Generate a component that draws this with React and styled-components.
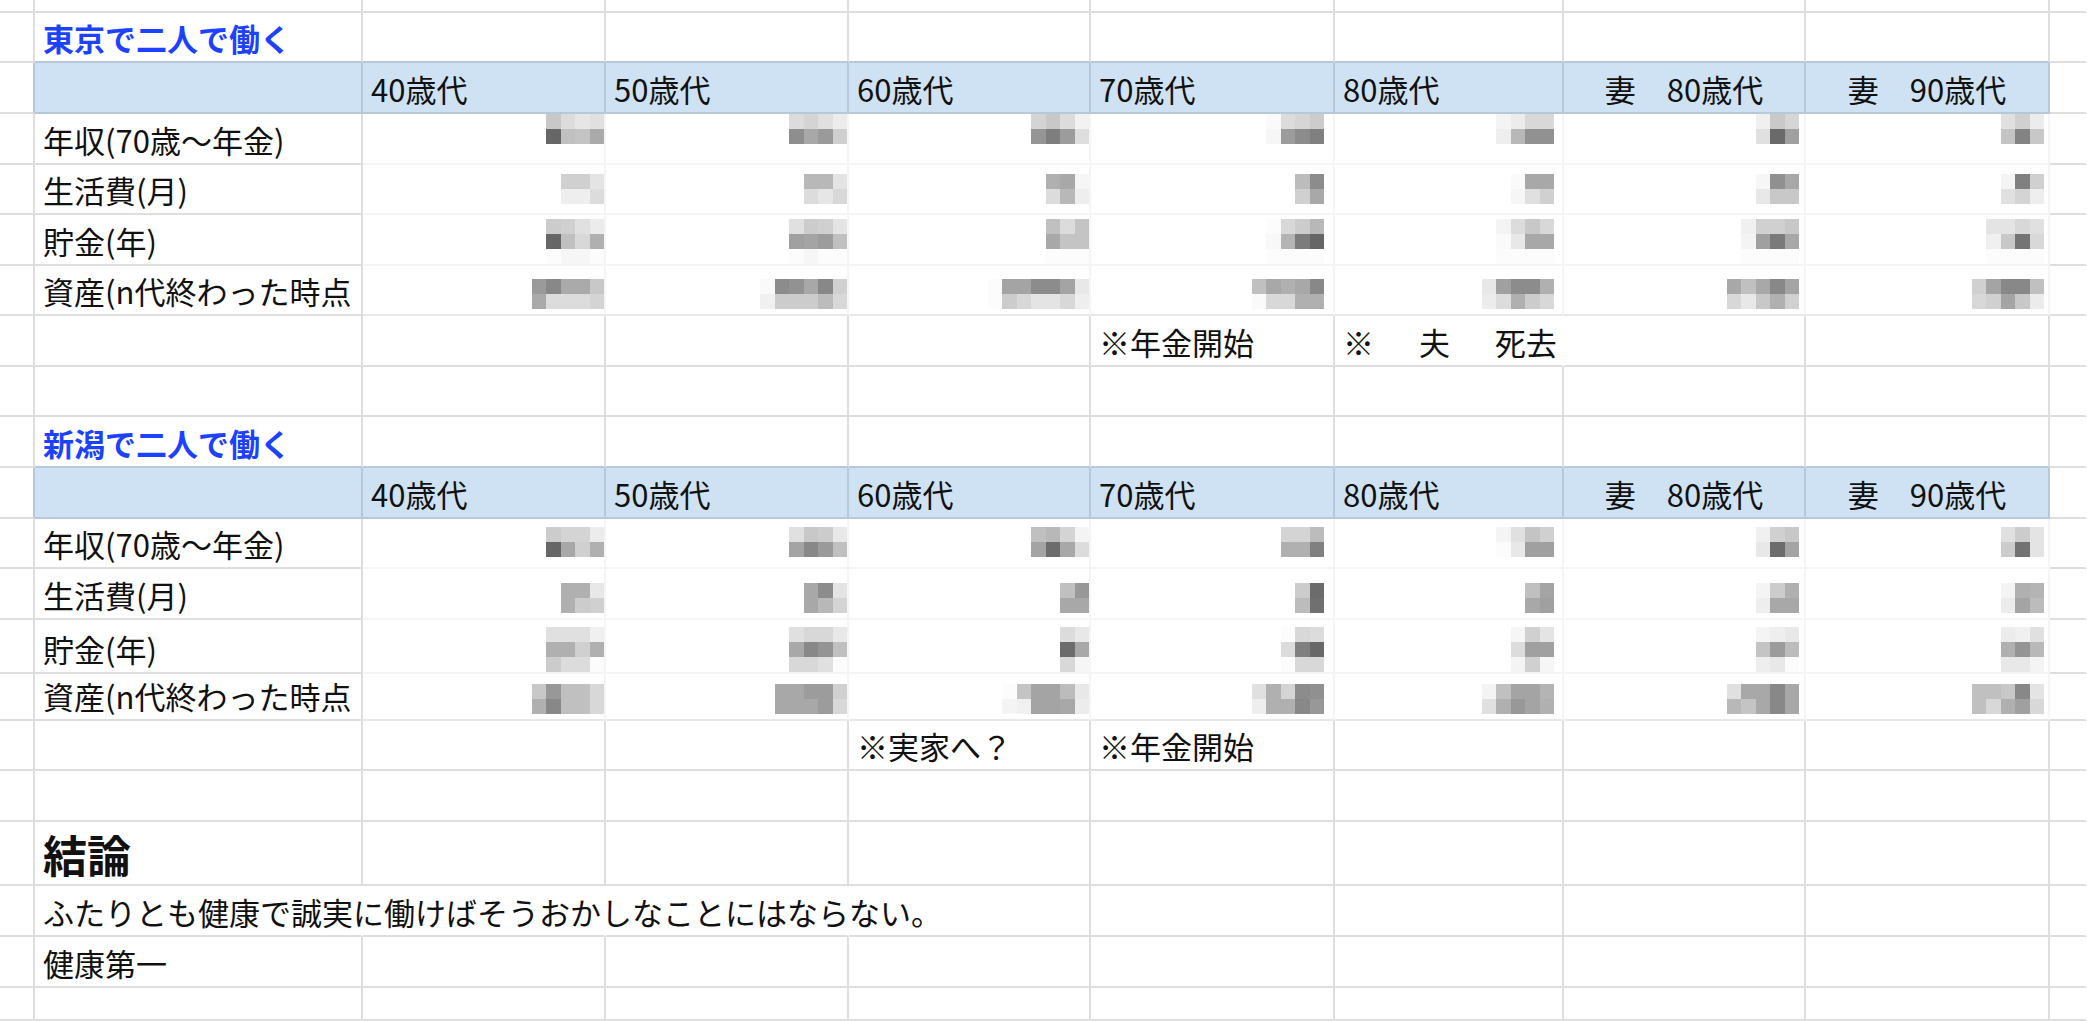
import React from "react";
import styled, { createGlobalStyle } from "styled-components";

// Цвета сетки таблицы
const GRID = "#dedede";
const HEAD_LINE = "#b7c8da";
const HEAD_FILL = "#cfe2f3";
const FAINT = "#f5f5f5";
const TITLE_BLUE = "#1c42ff";

const COLUMNS = "35px 328px 243px 243px 242px 244px 229px 242px 244px 1fr";
const MOSAIC_RIGHT = [0, 0, 0, 9, 8, 5, 4];

const GlobalStyle = createGlobalStyle`
  html, body {
    margin: 0;
    padding: 0;
    background: #ffffff;
  }
  body {
    font-family: "Noto Sans CJK JP", "Noto Sans", sans-serif;
    color: #111;
    overflow: hidden;
  }
`;

const HEADS = ["40歳代", "50歳代", "60歳代", "70歳代", "80歳代", "妻　80歳代", "妻　90歳代"];

const TOKYO = [
  {
    label: "年収(70歳〜年金)",
    offset: 0,
    cells: [
      "c8 dc e6 e0/66 c0 c4 aa",
      "dc d4 e0 ec/8e a8 9a cf",
      "d4 c8 dc f2/95 7e 9c de",
      "fa dc d6 cc/f6 9c 8c 80",
      "f4 ec d8 d8/ee b8 91 91",
      "f0 c9 d6/e0 6a a0",
      "e0 d0 ec/c4 83 c8",
    ],
  },
  {
    label: "生活費(月)",
    offset: 9,
    cells: [
      "d0 d0 e4/ee ee dc",
      "b8 b8 e4/dc e6 d8",
      "b0 a8 f6/dc b8 ee",
      "bc 8c/d0 a8",
      "fa a8 a8/f6 e0 d0",
      "f6 90 a8/e8 c8 c8",
      "f4 80 d0/e0 d4 ee",
    ],
  },
  {
    label: "貯金(年)",
    offset: 4,
    cells: [
      "cc d0 e0 ec/66 c0 d8 b0/fc f6 f6 fc",
      "e0 cc d0 e4/a0 a4 9c c0/fc f6 fc fc",
      "c0 dc c4/a8 c4 c4/fc fc fc",
      "fc d8 cc b8/f8 b4 7c 66/fc fc fc fc",
      "f4 dc c8 d8/fa e8 a8 a8/fc fc fc fc",
      "f0 d0 d0 c8/f4 a0 7a a8/fc fc fc fc",
      "e4 e4 d8 e0/f0 c8 74 d8/fc fc fc fc",
    ],
  },
  {
    label: "資産(n代終わった時点",
    offset: 13,
    cells: [
      "9a 88 aa aa c8/aa dc dc dc d4",
      "fa 8c 92 a8 88 d0/f0 cc cc cc bc d8",
      "fc a4 a4 8c 8c a4 e8/fc cc d8 e4 e4 d8 ee",
      "c0 a8 b0 a8 88/fa d8 d8 b0 b0",
      "e8 a0 8c 8c b0/ec dc b0 cc d8",
      "a8 c0 a8 88 a4/d8 e8 c8 b0 d0",
      "d0 a4 88 88 c0/d8 d0 a4 c8 ec",
    ],
  },
];

const NIIGATA = [
  {
    label: "年収(70歳〜年金)",
    offset: 8,
    cells: [
      "cc d4 d4 ec/66 a8 d0 b0",
      "e0 c8 cc e8/a4 88 9a c0",
      "c0 b8 d4 f4/a4 6c a8 dc",
      "d4 d4 bc/b0 b0 80",
      "f4 e0 c4 d0/fc e8 a0 a0",
      "f0 d0 c8/e8 6c a4",
      "e0 cc e4/cc 72 e4",
    ],
  },
  {
    label: "生活費(月)",
    offset: 14,
    cells: [
      "b0 b0 e8/b0 cc d0",
      "a8 8c e4/a8 b8 d4",
      "c0 98/a8 a8",
      "cc 6c/bc 70",
      "c0 a4/a8 a0",
      "f4 cc b0/ee a8 a8",
      "f4 b0 b4/ec a4 bc",
    ],
  },
  {
    label: "貯金(年)",
    offset: 7,
    cells: [
      "e0 e0 e0 f0/b0 b0 d0 b0/cc dc dc fc",
      "e0 d8 d8 e8/a8 88 94 c0/d8 d8 e0 fc",
      "dc e8/6c a8/d8 f6",
      "fc d8 dc/dc 80 68/fc d8 d8",
      "f6 d0 e4/dc a0 a0/f4 d0 f6",
      "f4 ee e8/c4 9c bc/ee e8 fc",
      "ec f0 e0/b0 94 b8/e8 e8 f4",
    ],
  },
  {
    label: "資産(n代終わった時点",
    offset: 13,
    cells: [
      "c8 98 c0 c0 d8/b0 88 c0 c0 d8",
      "a8 a8 9c 9c d0/a8 a8 a8 9c d8",
      "fc c4 a4 a4 bc e8/f4 f0 a4 a4 a8 ec",
      "e0 b0 d4 8c 90/ee b0 b0 88 98",
      "f4 c0 a4 a4 b4/e0 b0 98 a4 b0",
      "e0 a8 a8 88 a8/b8 c4 a8 88 a8",
      "c0 c0 c8 88 e4/c0 d8 b0 a0 d8",
    ],
  },
];

// Заметки под таблицами: индекс столбца -> текст
const TOKYO_NOTES = { 5: { text: "※年金開始" }, 6: { text: "※　  夫　  死去", spill: true } };
const NIIGATA_NOTES = { 4: { text: "※実家へ？" }, 5: { text: "※年金開始" } };

export default function App() {
  return (
    <>
      <GlobalStyle />
      <Sheet>
        <PlainRow h={13} />
        <Section
          title="東京で二人で働く"
          rows={TOKYO}
          notes={TOKYO_NOTES}
          heights={{ title: 50, head: 51, rows: [51, 50, 51, 50], note: 51, gap: 50 }}
        />
        <Section
          title="新潟で二人で働く"
          rows={NIIGATA}
          notes={NIIGATA_NOTES}
          heights={{ title: 51, head: 51, rows: [50, 51, 51, 50], note: 50, gap: 51 }}
        />
        <PlainRow h={64} texts={{ 1: { text: "結論", size: 44, bold: true } }} />
        <PlainRow
          h={51}
          texts={{ 1: { text: "ふたりとも健康で誠実に働けばそうおかしなことにはならない。" } }}
          spill={[1, 2, 3]}
        />
        <PlainRow h={51} texts={{ 1: { text: "健康第一" } }} />
        <PlainRow h={33} />
      </Sheet>
    </>
  );
}

function Section({ title, rows, notes, heights }) {
  return (
    <>
      <Row $h={heights.title}>
        <Cell />
        <Cell $hr={HEAD_LINE}>
          <Text $bold $color={TITLE_BLUE}>{title}</Text>
        </Cell>
        {HEADS.map((h) => (
          <Cell key={h} $hr={HEAD_LINE} />
        ))}
        <Cell $vr="transparent" />
      </Row>

      <Row $h={heights.head}>
        <Cell $vr={HEAD_LINE} />
        <Cell $fill={HEAD_FILL} $vr={HEAD_LINE} $hr={HEAD_LINE} />
        {HEADS.map((h, i) => (
          <Cell
            key={h}
            $fill={HEAD_FILL}
            $vr={HEAD_LINE}
            $hr={HEAD_LINE}
            $align={i >= 5 ? "center" : "left"}
          >
            <Text>{h}</Text>
          </Cell>
        ))}
        <Cell $vr="transparent" />
      </Row>

      {rows.map((r, ri) => (
        <Row key={r.label} $h={heights.rows[ri]}>
          <Cell />
          <Cell $clip>
            <Text>{r.label}</Text>
          </Cell>
          {r.cells.map((pattern, ci) => (
            <DataCell
              key={ci}
              $top={r.offset}
              $right={MOSAIC_RIGHT[ci]}
              $last={ri === rows.length - 1}
            >
              <Mosaic pattern={pattern} />
            </DataCell>
          ))}
          <Cell $vr="transparent" />
        </Row>
      ))}

      <PlainRow h={heights.note} texts={notes} />
      <PlainRow h={heights.gap} />
    </>
  );
}

// Обычная строка листа из 10 ячеек, в некоторых есть текст
function PlainRow({ h, texts = {}, spill = [] }) {
  const cells = [];
  for (let i = 0; i < 10; i++) {
    const t = texts[i];
    const hidden = spill.includes(i) || (t && t.spill);
    cells.push(
      <Cell key={i} $vr={i === 9 ? "transparent" : hidden ? "transparent" : undefined}>
        {t && (
          <Text $size={t.size} $bold={t.bold}>
            {t.text}
          </Text>
        )}
      </Cell>
    );
  }
  return <Row $h={h}>{cells}</Row>;
}

function Mosaic({ pattern }) {
  const lines = pattern.split("/").map((l) => l.trim().split(/\s+/));
  return (
    <TileGrid $cols={lines[0].length}>
      {lines.flat().map((s, i) => (
        <Tile key={i} $shade={`#${s}${s}${s}`} />
      ))}
    </TileGrid>
  );
}

const Sheet = styled.div`
  display: flex;
  flex-direction: column;
  width: 2087px;
  height: 1021px;
  overflow: hidden;
  background: #fff;
`;

const Row = styled.div`
  display: grid;
  grid-template-columns: ${COLUMNS};
  height: ${({ $h }) => $h}px;
  flex-shrink: 0;
`;

const Cell = styled.div`
  box-sizing: border-box;
  min-width: 0;
  display: flex;
  align-items: flex-end;
  justify-content: ${({ $align }) => ($align === "center" ? "center" : "flex-start")};
  padding: 0 8px 8px;
  border-right: 2px solid ${({ $vr }) => $vr || GRID};
  border-bottom: 2px solid ${({ $hr }) => $hr || GRID};
  background: ${({ $fill }) => $fill || "transparent"};
  overflow: ${({ $clip }) => ($clip ? "hidden" : "visible")};
`;

// Ячейка с замазанным значением (мозаика)
const DataCell = styled.div`
  box-sizing: border-box;
  min-width: 0;
  display: flex;
  justify-content: flex-end;
  align-items: flex-start;
  padding: ${({ $top }) => $top}px ${({ $right }) => $right}px 0 0;
  border-right: 2px solid ${FAINT};
  border-bottom: 2px solid ${({ $last }) => ($last ? "#e8e8e8" : FAINT)};
`;

const Text = styled.span`
  font-size: ${({ $size }) => $size || 31}px;
  line-height: ${({ $size }) => $size || 31}px;
  font-weight: ${({ $bold }) => ($bold ? 700 : 400)};
  color: ${({ $color }) => $color || "#111"};
  white-space: pre;
`;

const TileGrid = styled.div`
  display: grid;
  grid-template-columns: repeat(${({ $cols }) => $cols}, 14.5px);
  grid-auto-rows: 15px;
`;

const Tile = styled.span`
  background: ${({ $shade }) => $shade};
`;
